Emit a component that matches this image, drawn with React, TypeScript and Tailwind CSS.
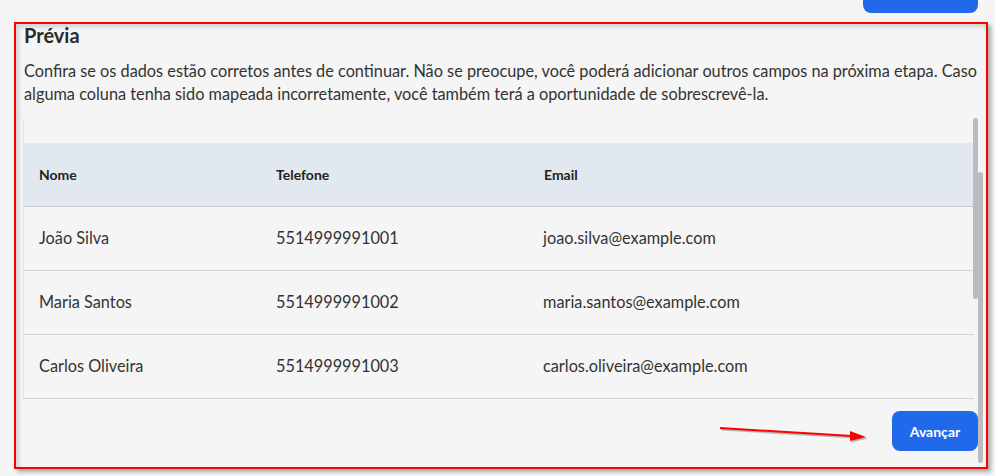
import React from "react";

const rows = [
  { name: "João Silva", phone: "5514999991001", email: "joao.silva@example.com" },
  { name: "Maria Santos", phone: "5514999991002", email: "maria.santos@example.com" },
  { name: "Carlos Oliveira", phone: "5514999991003", email: "carlos.oliveira@example.com" },
];

function RedArrow() {
  return (
    <svg className="absolute left-[716px] top-[420px] pointer-events-none" width="160" height="28" viewBox="0 0 160 28">
      <g transform="translate(1.5 1.5)" opacity="0.25">
        <line x1="4" y1="8" x2="136" y2="16" stroke="#000" strokeWidth="2" />
        <polygon points="150,17 134,11 134,21" fill="#000" />
      </g>
      <line x1="4" y1="8" x2="136" y2="16" stroke="#ff0000" strokeWidth="2" />
      <polygon points="150,17 134,11 134,21" fill="#ff0000" />
    </svg>
  );
}

export default function App() {
  return (
    <div className="relative w-[995px] h-[476px] overflow-hidden bg-[#f5f5f5] font-['Lato',sans-serif] text-[#333]">
      {/* button from the section above, scrolled out of view */}
      <div className="flex justify-end pr-[17px]">
        <div className="mt-[-27px] h-[40px] w-[115px] rounded-lg bg-[#2169eb]" />
      </div>

      <div className="relative ml-[14px] mt-[9px] h-[447px] w-[974px] border-2 border-[#ff0000] shadow-[3px_3px_4px_rgba(0,0,0,0.3),inset_3px_3px_4px_rgba(0,0,0,0.15)]">
        <div className="pl-[8px] pr-[8px]">
          <h2 className="text-[20px] leading-[22px] font-bold text-[#2a2a2a]">Prévia</h2>
          <p className="mt-[13px] text-[16.3px] leading-[23px] text-[#333]">
            <span className="block whitespace-nowrap">
              Confira se os dados estão corretos antes de continuar. Não se preocupe, você poderá adicionar outros campos na próxima etapa. Caso
            </span>
            <span className="block whitespace-nowrap">
              alguma coluna tenha sido mapeada incorretamente, você também terá a oportunidade de sobrescrevê-la.
            </span>
          </p>

          <div className="mt-[14px] -ml-[1px] w-[951px] border-l border-[#e4e4e4] pt-[24px]">
            <div className="grid grid-cols-[237px_267px_1fr] h-[64px] items-center bg-[#e2e8f0] border-b border-[#c9c9c9] text-[14px] font-bold text-[#222]">
              <div className="pl-[15px]">Nome</div>
              <div className="pl-[15px]">Telefone</div>
              <div className="pl-[16px]">Email</div>
            </div>
            {rows.map((r) => (
              <div key={r.phone} className="grid grid-cols-[237px_267px_1fr] h-[64px] items-center border-b border-[#d4d4d4] text-[16.3px] text-[#333]">
                <div className="pl-[15px]">{r.name}</div>
                <div className="pl-[15px]">{r.phone}</div>
                <div className="pl-[15px]">{r.email}</div>
              </div>
            ))}
          </div>

          <div className="flex justify-end mt-[12px]">
            <button className="h-[40px] w-[86px] rounded-lg bg-[#2169eb] text-[14px] font-bold text-white">
              Avançar
            </button>
          </div>
        </div>

        {/* scrollbars */}
        <div className="absolute left-[957px] top-[94px] h-[181px] w-[5px] rounded-full bg-[#bcbcbc]" />
        <div className="absolute left-[962px] top-[148px] h-[291px] w-[5px] rounded-full bg-[#bcbcbc]" />
      </div>

      <RedArrow />
    </div>
  );
}
